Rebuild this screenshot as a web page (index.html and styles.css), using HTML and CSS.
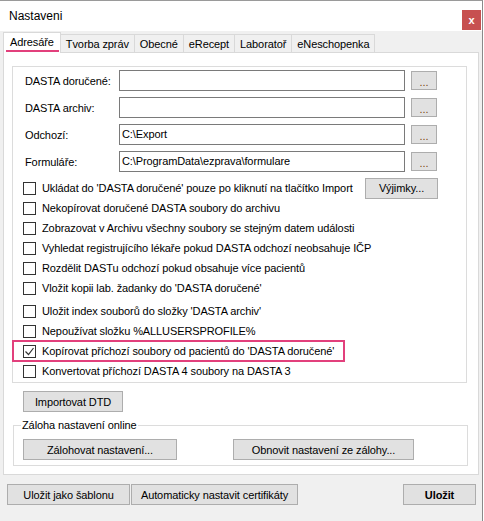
FILE: index.html
```html
<!DOCTYPE html>
<html lang="cs">
<head>
    <meta charset="UTF-8">
    <title>Nastaveni</title>
    <link rel="stylesheet" href="styles.css">
</head>
<body>
    <div class="window">
        <!-- Title bar -->
        <div class="titlebar">
            <span class="title">Nastaveni</span>
            <span class="close">x</span>
        </div>

        <div class="client">
            <!-- Tabs -->
            <div class="tabs">
                <div class="tab active"><span class="tab-label">Adresáře</span></div>
                <div class="tab">Tvorba zpráv</div>
                <div class="tab">Obecné</div>
                <div class="tab">eRecept</div>
                <div class="tab">Laboratoř</div>
                <div class="tab last">eNeschopenka</div>
            </div>

            <div class="panel">
                <div class="group paths">
                    <div class="field">
                        <label>DASTA doručené:</label>
                        <div class="textbox"></div>
                        <button class="btn browse">...</button>
                    </div>
                    <div class="field">
                        <label>DASTA archiv:</label>
                        <div class="textbox"></div>
                        <button class="btn browse">...</button>
                    </div>
                    <div class="field">
                        <label>Odchozí:</label>
                        <div class="textbox">C:\Export</div>
                        <button class="btn browse">...</button>
                    </div>
                    <div class="field">
                        <label>Formuláře:</label>
                        <div class="textbox">C:\ProgramData\ezprava\formulare</div>
                        <button class="btn browse">...</button>
                    </div>

                    <div class="check">
                        <span class="box"></span>
                        <span>Ukládat do 'DASTA doručené' pouze po kliknutí na tlačítko Import</span>
                        <button class="btn exceptions">Výjimky...</button>
                    </div>
                    <div class="check"><span class="box"></span><span>Nekopírovat doručené DASTA soubory do archivu</span></div>
                    <div class="check"><span class="box"></span><span>Zobrazovat v Archivu všechny soubory se stejným datem události</span></div>
                    <div class="check"><span class="box"></span><span>Vyhledat registrujícího lékaře pokud DASTA odchozí neobsahuje IČP</span></div>
                    <div class="check"><span class="box"></span><span>Rozdělit DASTu odchozí pokud obsahuje více pacientů</span></div>
                    <div class="check"><span class="box"></span><span>Vložit kopii lab. žadanky do 'DASTA doručené'</span></div>
                    <div class="check spaced"><span class="box"></span><span>Uložit index souborů do složky 'DASTA archiv'</span></div>
                    <div class="check"><span class="box"></span><span>Nepoužívat složku %ALLUSERSPROFILE%</span></div>
                    <div class="check marked">
                        <span class="box">
                            <svg width="11" height="11" viewBox="0 0 11 11"><polyline points="1.5,5.5 4.5,8.5 9.5,2" fill="none" stroke="#333" stroke-width="1.2"/></svg>
                        </span>
                        <span>Kopírovat příchozí soubory od pacientů do 'DASTA doručené'</span>
                    </div>
                    <div class="check"><span class="box"></span><span>Konvertovat příchozí DASTA 4 soubory na DASTA 3</span></div>
                </div>

                <button class="btn import">Importovat DTD</button>

                <fieldset class="backup">
                    <legend>Záloha nastavení online</legend>
                    <div class="backup-buttons">
                        <button class="btn backup-save">Zálohovat nastavení...</button>
                        <button class="btn backup-restore">Obnovit nastavení ze zálohy...</button>
                    </div>
                </fieldset>
            </div>

            <!-- Bottom buttons -->
            <div class="footer">
                <button class="btn template">Uložit jako šablonu</button>
                <button class="btn certs">Automaticky nastavit certifikáty</button>
                <button class="btn save">Uložit</button>
            </div>
        </div>
    </div>
</body>
</html>
```

FILE: styles.css
```css
/* General */
body {
    margin: 0;
    background: #ffffff;
    font-family: "Liberation Sans", Arial, sans-serif;
    font-size: 11px;
    letter-spacing: -0.1px;
    color: #000000;
}

.window {
    width: 482px;
    height: 520px;
    border-top: 1px solid #9a9a9a;
    border-right: 1px solid #8a8a8a;
    background: #f0f0f0;
}

/* Title bar */
.titlebar {
    height: 30px;
    background: #ffffff;
    display: flex;
    align-items: center;
    padding: 0 1px 0 9px;
}

.title {
    font-size: 12px;
    letter-spacing: 0;
}

.close {
    margin-left: auto;
    margin-top: 7px;
    width: 19px;
    height: 20px;
    background: #c75050;
    color: #ffffff;
    font-weight: bold;
    font-size: 11px;
    display: flex;
    align-items: center;
    justify-content: center;
}

.client {
    padding: 1px 3px 0 3px;
}

/* Tabs */
.tabs {
    display: flex;
    align-items: flex-end;
    height: 21px;
    margin-bottom: -1px;
    position: relative;
    z-index: 1;
}

.tab {
    height: 18px;
    box-sizing: border-box;
    margin-bottom: 1px;
    margin-left: -1px;
    padding: 3px 5px 0 5px;
    border: 1px solid #d9d9d9;
    border-bottom: none;
    background: #f0f0f0;
}

.tab.active {
    height: 21px;
    margin: 0 0 0 0;
    padding: 2px 1px 0 2px;
    background: #ffffff;
}

.tab-label {
    display: block;
    padding: 1px 5px 2px 4px;
    border-bottom: 2px solid #e2407c;
}

/* Tab page */
.panel {
    background: #ffffff;
    border: 1px solid #d9d9d9;
    padding-bottom: 8px;
}

.group {
    border: 1px solid #dcdcdc;
    box-sizing: border-box;
}

.paths {
    width: 455px;
    margin: 13px 0 0 8px;
    padding: 3px 0 1px 0;
}

.field {
    display: flex;
    align-items: center;
    height: 21px;
    margin-bottom: 6px;
    padding-left: 12px;
}

.field label {
    width: 94px;
}

.textbox {
    width: 286px;
    height: 21px;
    box-sizing: border-box;
    border: 1px solid #7a7a7a;
    padding-left: 2px;
    line-height: 19px;
}

.btn {
    font-family: inherit;
    font-size: 11px;
    letter-spacing: -0.1px;
    color: #000000;
    background: #e1e1e1;
    border: 1px solid #adadad;
    height: 21px;
    padding: 0;
    box-sizing: border-box;
}

.browse {
    width: 26px;
    height: 19px;
    margin-left: 6px;
    color: #7a4a10;
    line-height: 20px;
}

/* Checkboxes */
.check {
    display: flex;
    align-items: center;
    height: 20px;
    padding-left: 10px;
}

.check.spaced {
    margin-top: 3px;
}

.check.marked {
    width: max-content;
    padding-right: 10px;
    outline: 2px solid #e2407c;
    outline-offset: -1px;
}

.box {
    width: 13px;
    height: 13px;
    box-sizing: border-box;
    border: 1px solid #333333;
    margin-right: 6px;
    display: flex;
    align-items: center;
    justify-content: center;
}

.exceptions {
    width: 73px;
    margin-left: auto;
    margin-right: 28px;
}

.import {
    display: block;
    width: 100px;
    margin: 8px 0 0 19px;
}

/* Backup group */
.backup {
    width: 455px;
    margin: 7px 0 0 9px;
    padding: 0 0 5px 9px;
    border: 1px solid #dcdcdc;
    box-sizing: border-box;
}

.backup legend {
    padding: 0 1px;
    margin-left: -2px;
}

.backup-buttons {
    display: flex;
    margin-top: 8px;
}

.backup-save {
    width: 154px;
}

.backup-restore {
    width: 181px;
    margin-left: 56px;
}

/* Footer */
.footer {
    display: flex;
    margin-top: 9px;
    padding: 0 3px 0 4px;
}

.template {
    width: 123px;
}

.certs {
    width: 167px;
    margin-left: 1px;
}

.save {
    width: 73px;
    margin-left: auto;
    font-weight: bold;
}
```
